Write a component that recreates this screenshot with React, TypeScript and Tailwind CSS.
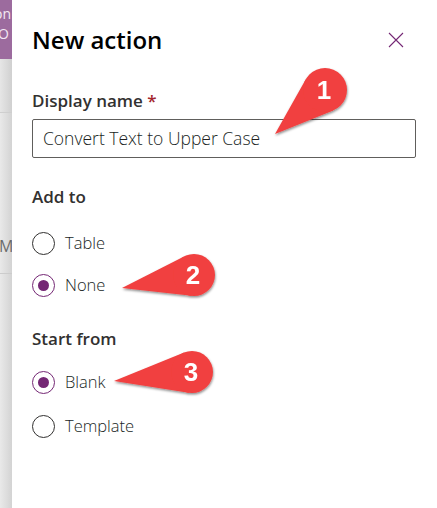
import React from "react";

type Callout = { cx: number; cy: number; r: number; tx: number; ty: number; n: string };

const callouts: Callout[] = [
  { cx: 325, cy: 90, r: 22, tx: 275, ty: 134, n: "1" },
  { cx: 194, cy: 275, r: 21, tx: 122, ty: 288, n: "2" },
  { cx: 192, cy: 372, r: 21, tx: 114, ty: 381, n: "3" },
];

function tangentPoints(c: Callout) {
  const dx = c.tx - c.cx;
  const dy = c.ty - c.cy;
  const d = Math.hypot(dx, dy);
  const theta = Math.atan2(dy, dx);
  const alpha = Math.acos(c.r / d);
  const p1 = [c.cx + c.r * Math.cos(theta + alpha), c.cy + c.r * Math.sin(theta + alpha)];
  const p2 = [c.cx + c.r * Math.cos(theta - alpha), c.cy + c.r * Math.sin(theta - alpha)];
  return `${c.tx},${c.ty} ${p1[0]},${p1[1]} ${p2[0]},${p2[1]}`;
}

function Radio({ label, checked }: { label: string; checked?: boolean }) {
  return (
    <div className="flex items-center h-[24px]">
      <div
        className={
          checked
            ? "w-[23px] h-[23px] rounded-full border border-[#742774] flex items-center justify-center"
            : "w-[23px] h-[23px] rounded-full border border-[#323130]"
        }
      >
        {checked && <div className="w-[11px] h-[11px] rounded-full bg-[#742774]" />}
      </div>
      <span className="ml-[10px] text-[16.5px] leading-[24px] font-light text-[#201f1e]">{label}</span>
    </div>
  );
}

export default function App() {
  return (
    <div
      className="relative w-[437px] h-[508px] flex overflow-hidden bg-white"
      style={{ fontFamily: '"Open Sans", "Noto Sans", sans-serif' }}
    >
      {/* left backdrop strip */}
      <div className="w-[12px] h-full flex flex-col overflow-hidden shrink-0">
        <div className="h-[59px] bg-[#9c6b9e] flex flex-col items-end pt-[4px] overflow-hidden">
          <div className="text-[14px] leading-[20px] text-[#f3e8f3] whitespace-nowrap pr-[1px]">on</div>
          <div className="text-[14px] leading-[20px] text-[#f3e8f3] whitespace-nowrap pr-[3px]">O</div>
        </div>
        <div className="h-[54px] bg-gradient-to-r from-[#e6e6e6] to-[#d0d0d0] border-b border-[#cfcfcf]" />
        <div className="h-[161px] bg-gradient-to-r from-[#e9e9e9] to-[#d3d3d3] border-b border-[#cccccc] flex flex-col overflow-hidden">
          <div className="mt-[121px] text-[16px] leading-[24px] text-[#6b6b6b] whitespace-nowrap -ml-[1px]">M</div>
        </div>
        <div className="flex-1 bg-gradient-to-r from-[#e9e9e9] to-[#d3d3d3]" />
      </div>

      {/* panel */}
      <div className="flex-1 flex flex-col pl-[20px] pt-[24px]">
        <div className="flex items-center justify-between pr-[33px]">
          <h1 className="text-[24px] leading-[32px] font-semibold text-[#000000]">New action</h1>
          <svg width="16" height="16" viewBox="0 0 16 16" className="block">
            <path d="M1 1 L15 15 M15 1 L1 15" stroke="#742774" strokeWidth="1.1" fill="none" />
          </svg>
        </div>

        <div className="mt-[33px] text-[17px] leading-[24px] font-semibold text-[#323130]">
          Display name <span className="text-[#a4262c]">*</span>
        </div>
        <div className="mt-[6px] w-[384px] h-[39px] border border-[#605e5c] rounded-[2px] flex items-center pl-[10px]">
          <span className="text-[17.5px] font-light text-[#201f1e] whitespace-nowrap">Convert Text to Upper Case</span>
        </div>

        <div className="mt-[27px] text-[17px] leading-[24px] font-semibold text-[#323130]">Add to</div>
        <div className="mt-[22px] flex flex-col gap-[18px]">
          <Radio label="Table" />
          <Radio label="None" checked />
        </div>

        <div className="mt-[30px] text-[17px] leading-[24px] font-semibold text-[#323130]">Start from</div>
        <div className="mt-[19px] flex flex-col gap-[20px]">
          <Radio label="Blank" checked />
          <Radio label="Template" />
        </div>
      </div>

      {/* callouts overlay */}
      <svg className="absolute inset-0 pointer-events-none" width="437" height="508" viewBox="0 0 437 508">
        <defs>
          <filter id="sh" x="-20%" y="-20%" width="140%" height="150%">
            <feDropShadow dx="0.5" dy="1.5" stdDeviation="0.8" floodColor="#000" floodOpacity="0.45" />
          </filter>
        </defs>
        {callouts.map((c) => (
          <g key={c.n} filter="url(#sh)">
            <polygon points={tangentPoints(c)} fill="#f1403f" />
            <circle cx={c.cx} cy={c.cy} r={c.r} fill="#f1403f" />
            <text
              x={c.cx - 1}
              y={c.cy + 9}
              textAnchor="middle"
              fill="#ffffff"
              fontSize="26"
              fontWeight="bold"
              fontFamily='"Liberation Sans", Arial, sans-serif'
            >
              {c.n}
            </text>
          </g>
        ))}
      </svg>
    </div>
  );
}
